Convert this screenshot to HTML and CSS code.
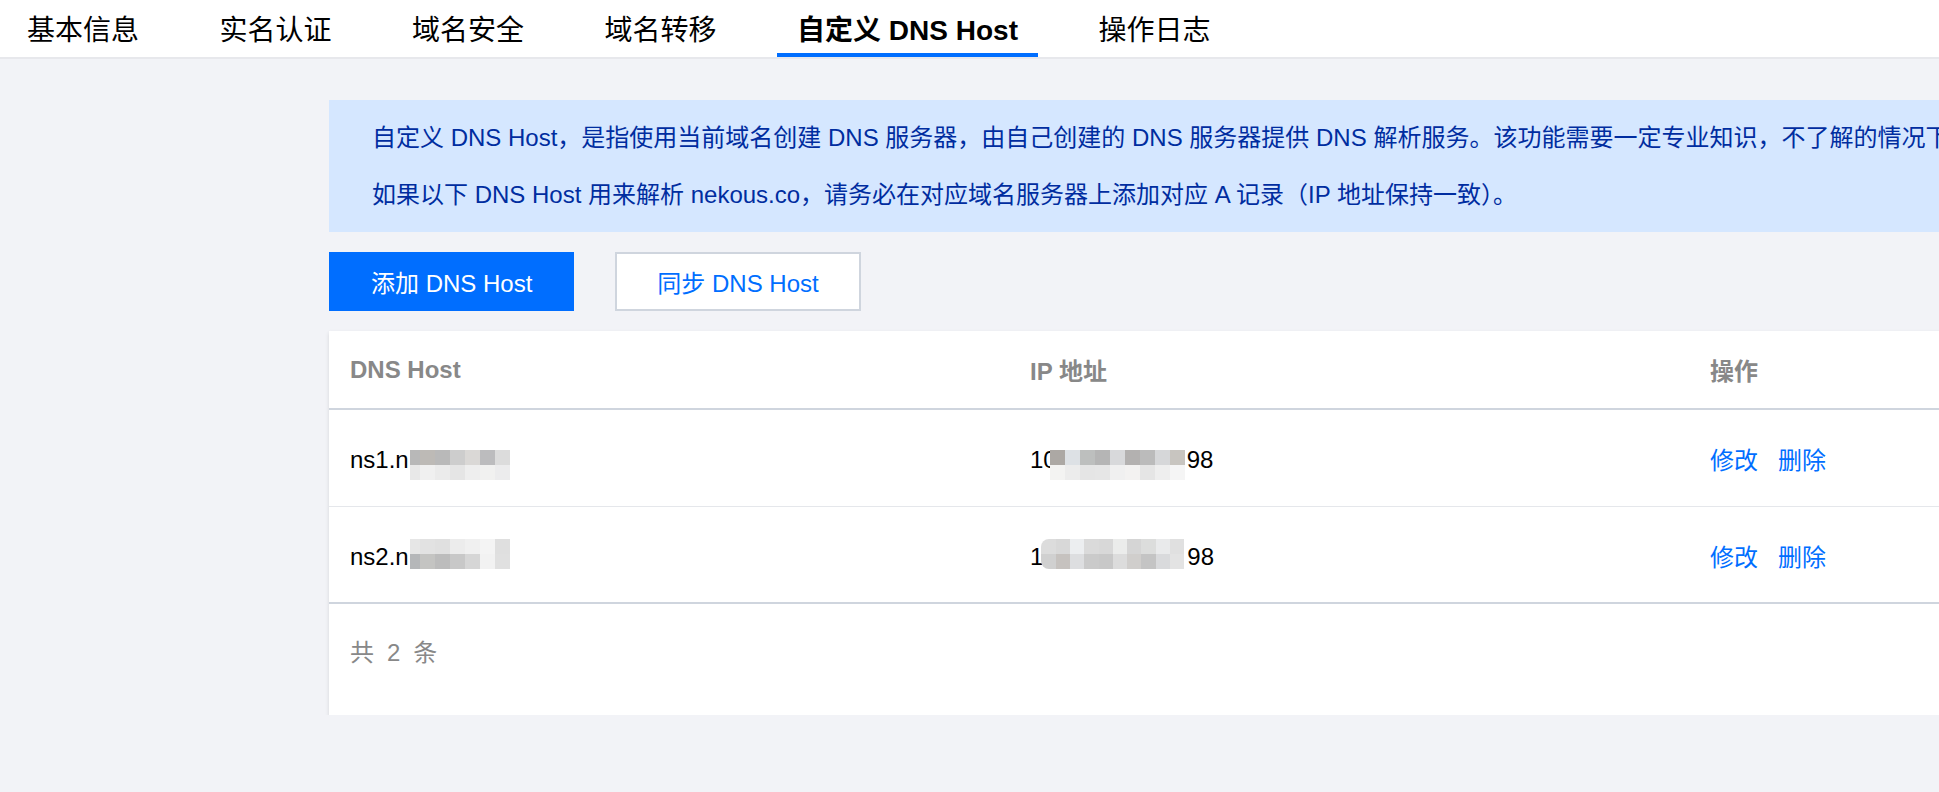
FILE: index.html
```html
<!DOCTYPE html>
<html lang="zh-CN">
<head>
  <meta charset="UTF-8" />
  <title>自定义 DNS Host</title>
  <link rel="stylesheet" href="styles.css">
</head>
<body>
  <div class="tabs">
    <a class="tab">基本信息</a>
    <a class="tab">实名认证</a>
    <a class="tab">域名安全</a>
    <a class="tab">域名转移</a>
    <a class="tab active">自定义 DNS Host</a>
    <a class="tab">操作日志</a>
  </div>

  <div class="main">
    <div class="alert">
      <p>自定义 DNS Host，是指使用当前域名创建 DNS 服务器，由自己创建的 DNS 服务器提供 DNS 解析服务。该功能需要一定专业知识，不了解的情况下请勿随意添加或修改。</p>
      <p>如果以下 DNS Host 用来解析 nekous.co，请务必在对应域名服务器上添加对应 A 记录（IP 地址保持一致）。</p>
    </div>

    <div class="actions">
      <button class="btn primary">添加 DNS Host</button>
      <button class="btn">同步 DNS Host</button>
    </div>

    <div class="card">
      <table>
        <thead>
          <tr>
            <th>DNS Host</th>
            <th>IP 地址</th>
            <th>操作</th>
          </tr>
        </thead>
        <tbody>
          <tr>
            <td>ns1.n<span class="mosaic m1">
                <i style="background:#b8b8b8"></i><i style="background:#bdbab6"></i><i style="background:#b9b9b9"></i><i style="background:#cdcdcd"></i><i style="background:#dad8d6"></i><i style="background:#bcbcbe"></i><i style="background:#dcdcdc"></i>
                <i style="background:#e8e8e8"></i><i style="background:#f0f0f0"></i><i style="background:#ebebeb"></i><i style="background:#e5e5e5"></i><i style="background:#eeeeee"></i><i style="background:#f1f1f0"></i><i style="background:#ececed"></i>
              </span></td>
            <td>10<span class="mosaic m1 ip">
                <i style="background:#aca8a4"></i><i style="background:#dde1e5"></i><i style="background:#bdbfbe"></i><i style="background:#b5b5b5"></i><i style="background:#d8d9db"></i><i style="background:#b3b1b0"></i><i style="background:#bbbbbb"></i><i style="background:#d6d7d9"></i><i style="background:#c8c5c0"></i>
                <i style="background:#f3f3f2"></i><i style="background:#ececec"></i><i style="background:#e5e5e5"></i><i style="background:#e6e6e6"></i><i style="background:#f0f0f0"></i><i style="background:#f3f2f1"></i><i style="background:#e5e5e5"></i><i style="background:#eeeeee"></i><i style="background:#f5f5f5"></i>
              </span>98</td>
            <td><a class="link">修改</a><a class="link">删除</a></td>
          </tr>
          <tr class="last">
            <td>ns2.n<span class="mosaic m2">
                <i style="background:#e6e6e6"></i><i style="background:#e2e2e2"></i><i style="background:#e0e0e0"></i><i style="background:#ececec"></i><i style="background:#f0f0f0"></i><i style="background:#f4f4f4"></i><i style="background:#dfdfdf"></i>
                <i style="background:#b5b7b9"></i><i style="background:#c4c4c2"></i><i style="background:#bcbcbc"></i><i style="background:#c8c8c8"></i><i style="background:#d6d6d6"></i><i style="background:#f2f2f2"></i><i style="background:#e0e0e0"></i>
              </span></td>
            <td>1<span class="mosaic m2 ip2">
                <i style="background:#dcdcdc"></i><i style="background:#d8d8d8"></i><i style="background:#eceef0"></i><i style="background:#dadada"></i><i style="background:#d8d8d8"></i><i style="background:#ebeceb"></i><i style="background:#d5d5d5"></i><i style="background:#dcdddc"></i><i style="background:#e9eaeb"></i><i style="background:#e0e0e0"></i>
                <i style="background:#d0d0d0"></i><i style="background:#c6c2bf"></i><i style="background:#dddee0"></i><i style="background:#cacaca"></i><i style="background:#c8c8c8"></i><i style="background:#dcdcdc"></i><i style="background:#d0cecc"></i><i style="background:#c4c4c4"></i><i style="background:#d9dadc"></i><i style="background:#e3e3e3"></i>
              </span>98</td>
            <td><a class="link">修改</a><a class="link">删除</a></td>
          </tr>
        </tbody>
      </table>
      <div class="pager">共<span class="num">2</span>条</div>
    </div>
  </div>
</body>
</html>
```

FILE: styles.css
```css
html, body {
  margin: 0;
  padding: 0;
  overflow: hidden;
  font-family: "Liberation Sans", "Noto Sans CJK SC", sans-serif;
  background: #f2f3f7;
  color: #000;
}

*, *::before, *::after {
  box-sizing: border-box;
}

.tabs {
  display: flex;
  gap: 40.5px;
  height: 59px;
  padding-left: 7px;
  background: #fff;
  border-bottom: 2px solid #e7e8ec;
  white-space: nowrap;
}

.tab {
  display: block;
  padding: 8px 20px 0;
  height: 57px;
  line-height: 45px;
  font-size: 28px;
  color: #000;
  border-bottom: 4px solid transparent;
  cursor: pointer;
}

.tab.active {
  font-weight: bold;
  border-bottom-color: #006eff;
}

.main {
  width: 2040px;
  margin-left: 329px;
  padding-top: 41px;
}

.alert {
  background: #d5e7ff;
  color: #002da0;
  font-size: 24px;
  padding: 20px 40px 19px 43px;
  white-space: nowrap;
}

.alert p {
  margin: 0;
  line-height: 36px;
}

.alert p + p {
  margin-top: 21px;
}

.actions {
  display: flex;
  gap: 41px;
  margin: 20px 0 20px;
}

.btn {
  height: 59px;
  padding: 0 40px;
  font-family: inherit;
  font-size: 24px;
  color: #006eff;
  background: #fff;
  border: 2px solid #cfd5de;
  cursor: pointer;
}

.btn.primary {
  color: #fff;
  background: #006eff;
  border-color: #006eff;
}

.card {
  background: #fff;
  box-shadow: 0 2px 4px rgba(0, 0, 0, 0.12);
}

table {
  width: 100%;
  table-layout: fixed;
  border-collapse: collapse;
  font-size: 24px;
}

th {
  height: 78px;
  padding: 0 21px;
  text-align: left;
  font-weight: bold;
  color: #888;
  border-bottom: 2px solid #cfd5de;
}

td {
  height: 97px;
  padding: 7px 21px 0;
  line-height: 30px;
  border-bottom: 1px solid #e5e7eb;
  white-space: nowrap;
}

tr.last td {
  border-bottom: 2px solid #cfd5de;
}

.link {
  color: #006eff;
  margin-right: 20px;
  cursor: pointer;
}

/* redaction mosaic, drawn over the hidden part of the value */
.mosaic {
  display: inline-grid;
  grid-template-columns: 10px repeat(6, 15px);
  grid-auto-rows: 15px;
  width: 100px;
  height: 30px;
  vertical-align: middle;
  position: relative;
  margin-left: 1px;
}

.mosaic i {
  display: block;
}

.mosaic.m1 {
  top: 3px;
}

.mosaic.m2 {
  top: -5px;
}

.mosaic.ip {
  grid-template-columns: repeat(9, 15px);
  width: 135px;
  margin-left: -7px;
  margin-right: 2px;
}

.mosaic.ip2 {
  grid-template-columns: repeat(10, 14.3px);
  width: 143px;
  margin-left: -2px;
  margin-right: 3px;
  border-radius: 8px 0 0 8px;
  overflow: hidden;
}

.pager {
  padding: 31px 21px 44px;
  line-height: 36px;
  font-size: 24px;
  color: #888;
}

.pager .num {
  margin: 0 13px;
}
```
